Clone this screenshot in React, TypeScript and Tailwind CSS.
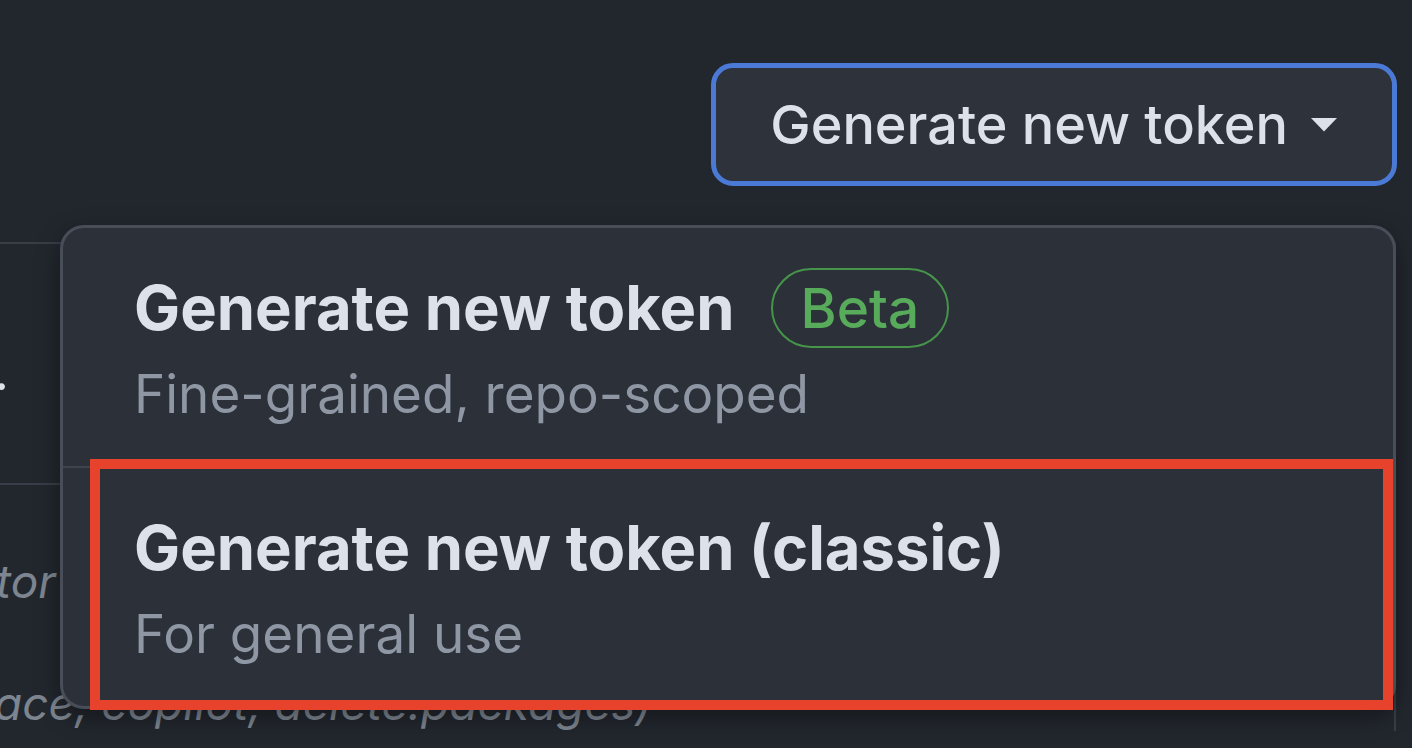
import React from "react";

function Caret() {
  return (
    <svg width="26" height="14" viewBox="0 0 26 14" className="shrink-0">
      <path d="M0 0h26L13 13.5z" fill="#dde2ea" />
    </svg>
  );
}

function MenuItem({
  title,
  subtitle,
  badge,
}: {
  title: string;
  subtitle: string;
  badge?: string;
}) {
  return (
    <div className="flex flex-col gap-[14px] pb-[40px] pl-[71px] pt-[40px]">
      <div className="flex h-[80px] items-center gap-[36px]">
        <span className="text-[61.5px] font-bold leading-[80px] text-[#dde2ea]">{title}</span>
        {badge && (
          <span className="flex h-[80px] items-center rounded-full border-2 border-[#46954a] px-[28px] text-[55px] font-medium text-[#57ab5a]">
            {badge}
          </span>
        )}
      </div>
      <p className="text-[53px] leading-[64px] text-[#8e97a3]">{subtitle}</p>
    </div>
  );
}

export default function App() {
  return (
    <div className="relative h-[748px] w-[1412px] overflow-hidden bg-[#22272e] font-['Inter',sans-serif]">
      {/* Header with dropdown trigger */}
      <div className="flex h-[242px] justify-end pr-[15px] pt-[63px]">
        <button className="flex h-[123px] items-center gap-[23px] rounded-[22px] border-[5px] border-[#4a7ad6] bg-[#2d323b] pl-[54px] pr-[55px] text-[54px] font-medium text-[#dde2ea]">
          Generate new token
          <Caret />
        </button>
      </div>

      {/* Token list behind the menu */}
      <div className="mr-[16px] border-r-2 border-t-2 border-[#373e47]">
        <div className="h-[241px] border-b-2 border-[#373e47] pt-[98px]">
          <span className="-ml-[6px] block text-[52px] leading-[60px] text-[#dde2ea]">.</span>
        </div>
        <div className="flex flex-col gap-[66px] pt-[68px] text-[46px] italic leading-[56px] text-[#7d8590]">
          <p className="-ml-[4px] whitespace-nowrap">tor access to admin:org and workflow</p>
          <p className="-ml-[6px] whitespace-nowrap">ace, copilot, delete:packages)</p>
        </div>
      </div>

      {/* Dropdown menu */}
      <div className="absolute left-[60px] top-[225px] w-[1336px] overflow-hidden rounded-[24px] border-[3px] border-[#474e58] bg-[#2b3039] shadow-[0_8px_24px_rgba(0,0,0,0.4)]">
        <MenuItem title="Generate new token" subtitle="Fine-grained, repo-scoped" badge="Beta" />
        <div className="h-[2px] bg-[#3d444d]" />
        <MenuItem title="Generate new token (classic)" subtitle="For general use" />
      </div>

      {/* Highlight annotation */}
      <div className="absolute left-[90px] top-[459px] h-[251px] w-[1303px] border-[10px] border-[#e7422b]" />
    </div>
  );
}
